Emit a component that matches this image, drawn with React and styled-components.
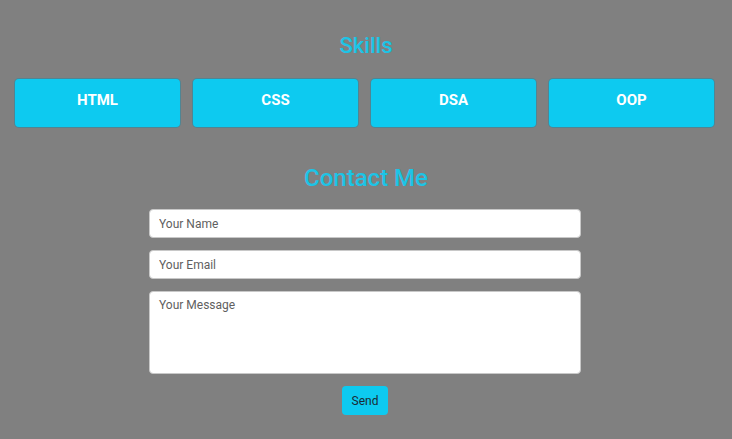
import styled, { createGlobalStyle } from "styled-components";

const GlobalStyle = createGlobalStyle`
  body {
    margin: 0;
    background: #808080;
    font-family: Roboto, "Liberation Sans", sans-serif;
  }
`;

const skills = ["HTML", "CSS", "DSA", "OOP"];

function App() {
  return (
    <Page>
      <GlobalStyle />
      <Section>
        <Heading size={22}>Skills</Heading>
        <SkillGrid>
          {skills.map((s) => (
            <SkillCard key={s}>{s}</SkillCard>
          ))}
        </SkillGrid>
      </Section>
      <Contact>
        <Heading size={24}>Contact Me</Heading>
        <Form onSubmit={(e) => e.preventDefault()}>
          <Field type="text" placeholder="Your Name" />
          <Field type="email" placeholder="Your Email" />
          <Message placeholder="Your Message" />
          <SendButton type="submit">Send</SendButton>
        </Form>
      </Contact>
    </Page>
  );
}

const Page = styled.div`
  padding: 32px 15px 0 15px;
`;

const Section = styled.section`
  display: flex;
  flex-direction: column;
  align-items: stretch;
`;

const Heading = styled.h2`
  margin: 0;
  text-align: center;
  color: #1cc4e6;
  font-size: ${(p) => p.size}px;
  font-weight: 500;
  line-height: 28px;
`;

const SkillGrid = styled.div`
  display: grid;
  grid-template-columns: repeat(4, 165px);
  gap: 13px;
  margin-top: 19px;
  width: 699px;
`;

const SkillCard = styled.div`
  height: 48px;
  background: #0dcaf0;
  border-radius: 4px;
  box-shadow: 0 0 0 1px rgba(20, 140, 170, 0.45);
  display: flex;
  align-items: center;
  justify-content: center;
  color: #fff;
  font-size: 15px;
  font-weight: 700;
  padding-bottom: 6px;
  box-sizing: border-box;
`;

const Contact = styled.section`
  margin-top: 37px;
  display: flex;
  flex-direction: column;
  align-items: center;
`;

const Form = styled.form`
  margin-top: 17px;
  width: 432px;
  display: flex;
  flex-direction: column;
  align-items: center;
  gap: 12px;
  margin-right: 2px;
`;

const Field = styled.input`
  width: 100%;
  height: 29px;
  box-sizing: border-box;
  border: 1px solid #c8c8c8;
  border-radius: 4px;
  padding: 0 9px;
  font-family: Roboto, "Liberation Sans", sans-serif;
  font-size: 12px;
  background: #fff;
  outline: none;
  &::placeholder {
    color: #5f5f5f;
  }
`;

const Message = styled.textarea`
  width: 100%;
  height: 83px;
  box-sizing: border-box;
  border: 1px solid #c8c8c8;
  border-radius: 4px;
  padding: 6px 9px;
  font-family: Roboto, "Liberation Sans", sans-serif;
  font-size: 12px;
  resize: none;
  outline: none;
  &::placeholder {
    color: #5f5f5f;
  }
`;

const SendButton = styled.button`
  width: 46px;
  height: 29px;
  border: none;
  border-radius: 4px;
  background: #0dcaf0;
  color: #1b2a33;
  font-family: Roboto, "Liberation Sans", sans-serif;
  font-size: 12px;
  cursor: pointer;
`;

export default App;
